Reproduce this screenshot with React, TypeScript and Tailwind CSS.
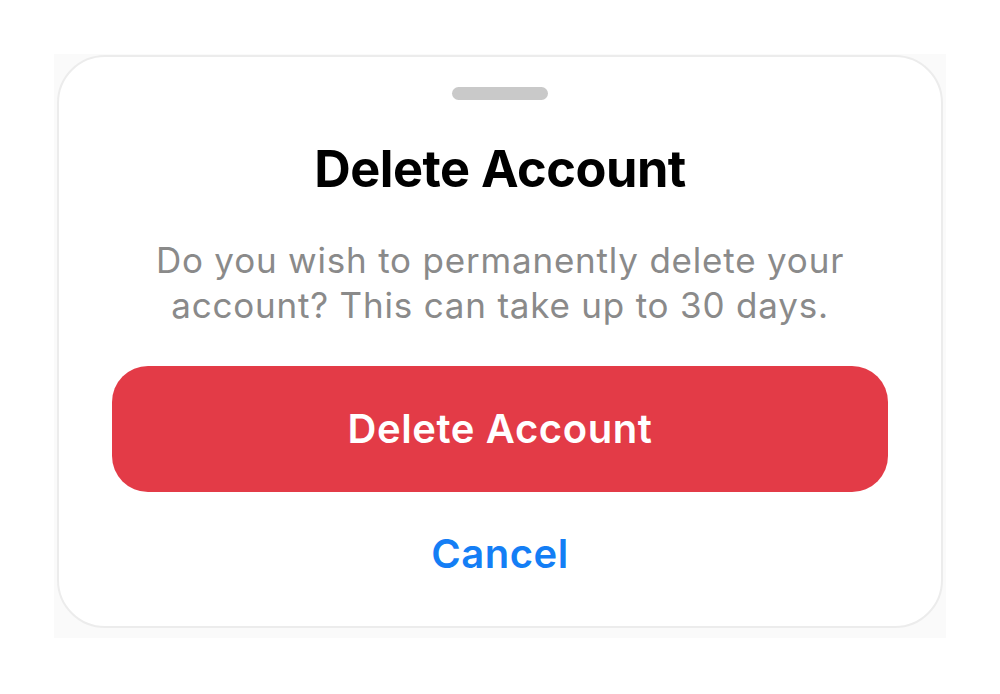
import React from "react";

export default function App() {
  return (
    <div className="w-[1000px] h-[694px] bg-white flex justify-center pt-[54px]" style={{ fontFamily: 'Inter, "Noto Sans", sans-serif' }}>
      <div className="w-[892px] h-[584px] bg-[#fafafa] flex justify-center">
        <div className="w-[886px] h-[573px] mt-[1px] bg-white border-2 border-[#ececec] rounded-[48px] flex flex-col items-center">
          <div className="mt-[30px] w-[96px] h-[13px] rounded-full bg-[#c9c9c9]" />
          <h1 className="mt-[37px] text-[50.5px] leading-[64px] font-bold text-black tracking-[-0.5px]">Delete Account</h1>
          <p className="mt-[37px] text-[35px] leading-[45px] text-[#8a8a8a] text-center tracking-[0.8px]">
            Do you wish to permanently delete your
            <br />
            account? This can take up to 30 days.
          </p>
          <button className="mt-[38px] w-[776px] h-[126px] rounded-[36px] bg-[#e33b47] text-white text-[40px] font-semibold tracking-[0.6px]">
            Delete Account
          </button>
          <button className="mt-[32px] text-[40px] font-semibold text-[#147ef5] tracking-[0.5px]">Cancel</button>
        </div>
      </div>
    </div>
  );
}
